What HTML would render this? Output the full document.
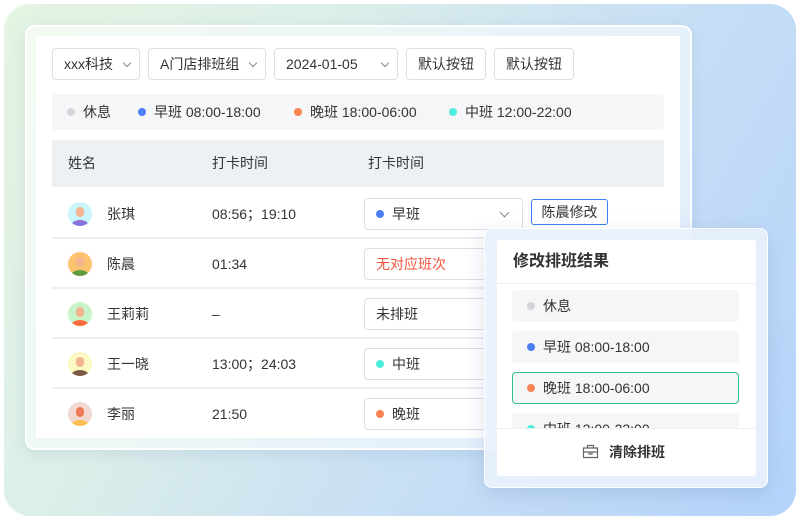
<!DOCTYPE html>
<html><head><meta charset="utf-8"><style>
*{margin:0;padding:0;box-sizing:border-box}
body{width:800px;height:520px;overflow:hidden;background:#fff;font-family:"Liberation Sans","Noto Sans CJK SC",sans-serif;color:#333;position:relative}
.bg{position:absolute;left:4px;top:4px;width:792px;height:512px;border-radius:26px;background:linear-gradient(120deg,#e4f4e2 0%,#dcefe8 30%,#c9e0f4 60%,#b5d3fb 100%)}
.card{position:absolute;left:25px;top:25px;width:667px;height:425px;border-radius:10px;background:rgba(255,255,255,.55);border:2px solid rgba(255,255,255,.9);box-shadow:0 4px 14px rgba(100,130,180,.15)}
.panel{position:absolute;left:36px;top:36px;width:644px;height:402px;background:#fff}
.abs{position:absolute}
.sel{position:absolute;top:48px;height:32px;border:1px solid #dcdfe4;border-radius:4px;font-size:14px;line-height:30px;padding-left:11px;color:#333;background:#fff}
.sel i{position:absolute;right:9px;top:11px;width:6px;height:6px;border-right:1.2px solid #888;border-bottom:1.2px solid #888;transform:rotate(45deg)}
.btn{position:absolute;top:48px;height:32px;border:1px solid #dcdfe4;border-radius:4px;font-size:14px;line-height:30px;text-align:center;background:#fff}
.dot{display:inline-block;width:8px;height:8px;border-radius:50%;margin-right:8px;vertical-align:1px}
.legend{position:absolute;left:52px;top:94px;width:612px;height:36px;background:#f5f6f8;border-radius:4px;font-size:14px;line-height:36px;padding-left:15px;white-space:nowrap}
.legend span{position:absolute;top:0}
.thead{position:absolute;left:52px;top:140px;width:612px;height:47px;background:#edf1f4;font-size:14px;line-height:47px}
.row{position:absolute;left:52px;width:612px;height:50px;border-bottom:2px solid #edeef2;font-size:14px}
.row .n{position:absolute;left:55px;top:0;line-height:50px}
.row .t{position:absolute;left:160px;top:0;line-height:50px}
.av{position:absolute;left:16px;top:13px;width:24px;height:24px;border-radius:50%;overflow:hidden}
.av b{position:absolute;left:3px;bottom:-6px;width:18px;height:12px;border-radius:50%}
.av u{position:absolute;left:8px;top:5px;width:8px;height:10px;border-radius:4px;background:#f3b48f}
.cell{position:absolute;left:312px;top:9px;width:159px;height:32px;border:1px solid #dcdfe4;border-radius:4px;font-size:14px;line-height:30px;padding-left:11px;background:#fff}
.pop{position:absolute;left:484px;top:228px;width:284px;height:260px;border-radius:8px;background:rgba(232,241,252,.92);border:1.5px solid #fff;box-shadow:0 6px 20px rgba(90,120,170,.2)}
.pin{position:absolute;left:497px;top:240px;width:259px;height:236px;background:#fff;border-radius:3px}
.opt{position:absolute;left:512px;width:227px;height:32px;background:#f5f6f8;border-radius:4px;font-size:14px;line-height:32px;padding-left:15px}
</style></head><body>
<div class="bg"></div>
<div class="card"></div>
<div class="panel"></div>
<div class="sel" style="left:52px;width:88px">xxx科技<i></i></div>
<div class="sel" style="left:148px;width:118px">A门店排班组<i></i></div>
<div class="sel" style="left:274px;width:124px">2024-01-05<i></i></div>
<div class="btn" style="left:406px;width:80px">默认按钮</div>
<div class="btn" style="left:494px;width:80px">默认按钮</div>
<div class="legend"><span style="left:15px"><i class="dot" style="background:#d4d6da"></i>休息</span><span style="left:86px"><i class="dot" style="background:#4c7ef5"></i>早班 08:00-18:00</span><span style="left:242px"><i class="dot" style="background:#fa8354"></i>晚班 18:00-06:00</span><span style="left:397px"><i class="dot" style="background:#4deedd"></i>中班 12:00-22:00</span></div>
<div class="thead"><span class="abs" style="left:16px">姓名</span><span class="abs" style="left:160px">打卡时间</span><span class="abs" style="left:316px">打卡时间</span></div>

<div class="row" style="top:189px"><div class="av" style="background:#c9f6fb"><b style="background:#8a72dd"></b><u></u></div><span class="n">张琪</span><span class="t">08:56；19:10</span><div class="cell"><i class="dot" style="background:#4c7ef5"></i>早班<i style="position:absolute;right:14px;top:10px;width:7px;height:7px;border-right:1.2px solid #888;border-bottom:1.2px solid #888;transform:rotate(45deg)"></i></div>
<div class="abs" style="left:479px;top:10px;width:77px;height:26px;border:1px solid #3d7ef0;border-radius:3px;font-size:14px;line-height:24px;text-align:center">陈晨修改</div></div>
<div class="row" style="top:239px"><div class="av" style="background:#fcc36f"><b style="background:#5d9c3f"></b><u></u></div><span class="n">陈晨</span><span class="t">01:34</span><div class="cell" style="color:#f5533d">无对应班次</div></div>
<div class="row" style="top:289px"><div class="av" style="background:#c7f5c9"><b style="background:#fa6a3c"></b><u></u></div><span class="n">王莉莉</span><span class="t">–</span><div class="cell">未排班</div></div>
<div class="row" style="top:339px"><div class="av" style="background:#fdf8c4"><b style="background:#7d5a45"></b><u></u></div><span class="n">王一晓</span><span class="t">13:00；24:03</span><div class="cell"><i class="dot" style="background:#4deedd"></i>中班</div></div>
<div class="row" style="top:389px;border:none"><div class="av" style="background:#f2d9d2"><b style="background:#fcbf4f"></b><u style="background:#f07b5a"></u></div><span class="n">李丽</span><span class="t">21:50</span><div class="cell"><i class="dot" style="background:#fa8354"></i>晚班</div></div>

<div class="pop"></div>
<div class="pin"></div>
<div class="abs" style="left:513px;top:250px;font-size:16px;font-weight:bold;line-height:24px">修改排班结果</div>
<div class="abs" style="left:497px;top:283px;width:259px;height:1px;background:#eceef1"></div>
<div class="opt" style="top:290px"><i class="dot" style="background:#d4d6da"></i>休息</div>
<div class="opt" style="top:331px"><i class="dot" style="background:#4c7ef5"></i>早班 08:00-18:00</div>
<div class="opt" style="top:372px;border:1px solid #2fbf85;line-height:30px;padding-left:14px"><i class="dot" style="background:#fa8354"></i>晚班 18:00-06:00</div>
<div class="abs" style="left:512px;top:413px;width:227px;height:15px;overflow:hidden"><div class="opt" style="left:0;top:0;height:32px"><i class="dot" style="background:#4deedd"></i>中班 12:00-22:00</div></div>
<div class="abs" style="left:497px;top:428px;width:259px;height:1px;background:#eceef1"></div>
<svg class="abs" style="left:582px;top:444px" width="17" height="15" viewBox="0 0 17 15"><path d="M5.5 4V1.5h6V4M1.5 4h14v9.5h-14zM1.5 8h14M7 8v2h3V8" fill="none" stroke="#666" stroke-width="1.2"/></svg>
<div class="abs" style="left:609px;top:442px;font-size:14px;font-weight:bold;line-height:20px">清除排班</div>
</body></html>
